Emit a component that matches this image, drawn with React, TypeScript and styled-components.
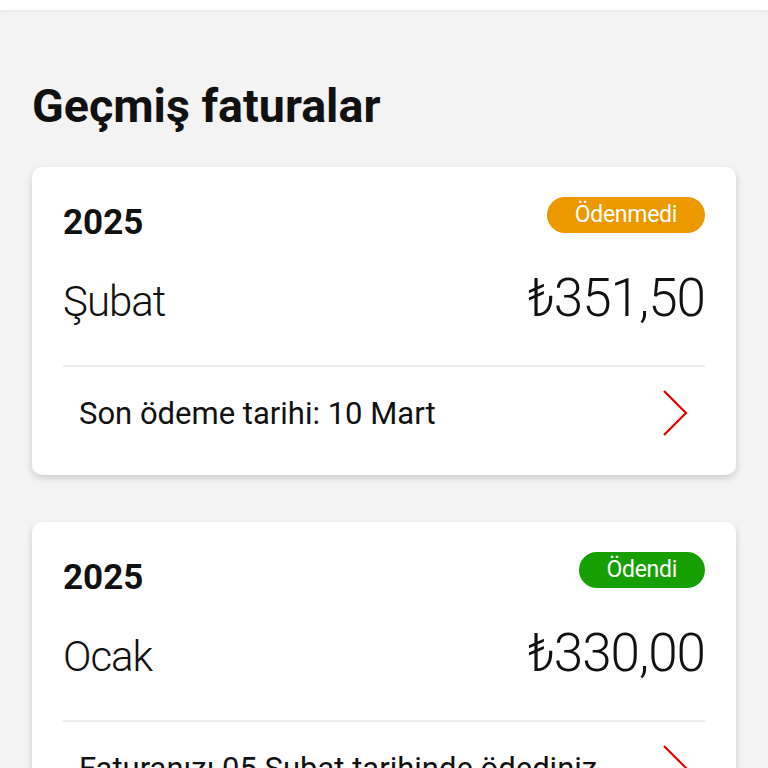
import React from "react";
import styled, { createGlobalStyle } from "styled-components";

const GlobalStyle = createGlobalStyle`
  html, body {
    margin: 0;
    padding: 0;
    background: #f3f3f3;
  }
  body {
    font-family: Roboto, "Liberation Sans", sans-serif;
    color: #111;
    overflow: hidden;
  }
`;

type Status = "unpaid" | "paid";

const statusColors: Record<Status, string> = {
  unpaid: "#ec9900",
  paid: "#169f00",
};

const Page = styled.div`
  min-height: 768px;
  background: #f3f3f3;
`;

const TopBar = styled.div`
  height: 10px;
  background: #fff;
  box-shadow: 0 1px 4px rgba(0, 0, 0, 0.06);
`;

const Content = styled.main`
  padding: 0 32px;
`;

const Title = styled.h1`
  margin: 69px 0 34px;
  font-size: 46.6px;
  line-height: 54px;
  font-weight: 700;
  color: #111;
`;

const CardList = styled.div`
  display: flex;
  flex-direction: column;
  gap: 47px;
`;

const Card = styled.section`
  background: #fff;
  border-radius: 10px;
  box-shadow: 0 3px 7px rgba(0, 0, 0, 0.16);
  padding: 30px 31px 0;
`;

const TopRow = styled.div`
  display: flex;
  justify-content: space-between;
  align-items: flex-start;
`;

const Year = styled.div`
  margin-top: 6px;
  font-size: 35px;
  line-height: 40px;
  font-weight: 700;
`;

const Badge = styled.span<{ $status: Status }>`
  height: 36px;
  padding: 0 28px;
  border-radius: 18px;
  background: ${({ $status }) => statusColors[$status]};
  color: #fff;
  font-size: 23px;
  line-height: 36px;
  font-weight: 400;
  letter-spacing: -0.3px;
`;

const AmountRow = styled.div`
  display: flex;
  justify-content: space-between;
  align-items: baseline;
  margin-top: 25px;
  height: 60px;
`;

const Month = styled.span`
  font-size: 42px;
  line-height: 60px;
  font-weight: 300;
  letter-spacing: -1px;
`;

const Amount = styled.span`
  font-size: 53px;
  line-height: 60px;
  font-weight: 300;
  letter-spacing: -1px;
`;

const Divider = styled.hr`
  margin: 37px 0 0;
  border: none;
  border-top: 2px solid #ececec;
`;

const Footer = styled.button`
  display: flex;
  align-items: center;
  justify-content: space-between;
  width: 100%;
  height: 108px;
  padding: 0 16px 16px;
  border: none;
  background: none;
  font-family: Roboto, "Liberation Sans", sans-serif;
  font-size: 31px;
  color: #111;
  cursor: pointer;
  text-align: left;
`;

const Chevron = () => (
  <svg width="28" height="48" viewBox="0 0 28 48" fill="none">
    <polyline
      points="3,2 25,24 3,46"
      stroke="#e60000"
      strokeWidth="2.2"
      strokeLinejoin="miter"
    />
  </svg>
);

type Invoice = {
  year: string;
  month: string;
  amount: string;
  status: Status;
  label: string;
  note: string;
};

const invoices: Invoice[] = [
  {
    year: "2025",
    month: "Şubat",
    amount: "₺351,50",
    status: "unpaid",
    label: "Ödenmedi",
    note: "Son ödeme tarihi: 10 Mart",
  },
  {
    year: "2025",
    month: "Ocak",
    amount: "₺330,00",
    status: "paid",
    label: "Ödendi",
    note: "Faturanızı 05 Şubat tarihinde ödediniz",
  },
];

export default function App() {
  return (
    <Page>
      <GlobalStyle />
      <TopBar />
      <Content>
        <Title>Geçmiş faturalar</Title>
        <CardList>
          {invoices.map((inv) => (
            <Card key={inv.month}>
              <TopRow>
                <Year>{inv.year}</Year>
                <Badge $status={inv.status}>{inv.label}</Badge>
              </TopRow>
              <AmountRow>
                <Month>{inv.month}</Month>
                <Amount>{inv.amount}</Amount>
              </AmountRow>
              <Divider />
              <Footer>
                <span>{inv.note}</span>
                <Chevron />
              </Footer>
            </Card>
          ))}
        </CardList>
      </Content>
    </Page>
  );
}
